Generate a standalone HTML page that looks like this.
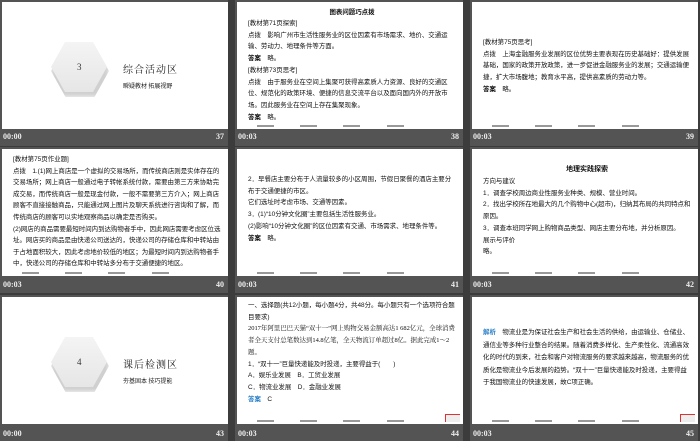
<!DOCTYPE html>
<html><head><meta charset="utf-8"><style>
*{margin:0;padding:0;box-sizing:border-box}
body{width:700px;height:438px;background:#3c3c3c;position:relative;overflow:hidden;font-family:"Liberation Sans","Noto Sans CJK SC",sans-serif}
.cell{position:absolute;width:228px;height:146px;background:#545454}
.s{position:absolute;left:2px;top:2px;width:226px;height:127px;background:#fff;overflow:hidden}
.t{position:absolute;top:132px;font:bold 8px "Liberation Serif",serif;color:#eee}
.tl{left:3px}.tr{right:4px}
.txt{position:absolute;left:11px;right:7px;font-size:6.45px;line-height:11.7px;color:#111;font-family:"Liberation Sans","Noto Sans CJK SC",sans-serif}
.foot{position:absolute;top:123px;height:2px;width:17px;background:#999}
b{font-weight:bold}
.hex{position:absolute;width:56px;height:50px;background:linear-gradient(#f4f4f4,#e6e6e6);clip-path:polygon(25% 0,75% 0,100% 50%,75% 100%,25% 100%,0 50%);}
.hexs{position:absolute;width:58px;height:52px;background:#d0d0d0;clip-path:polygon(25% 0,75% 0,100% 50%,75% 100%,25% 100%,0 50%);filter:blur(2px)}
.num{position:absolute;font:9px "Liberation Serif",serif;color:#333}
.ht{position:absolute;font:10px "Noto Serif CJK SC",serif;color:#222;letter-spacing:1px}
.hs{position:absolute;font:6px "Noto Sans CJK SC",sans-serif;color:#222}
</style></head><body>

<div class="cell" style="left:0;top:0">
 <div class="s">
  <div class="hexs" style="left:49px;top:43px"></div>
  <div class="hex" style="left:49px;top:40px"></div>
  <div class="num" style="left:75px;top:60px">3</div>
  <div class="ht" style="left:121px;top:59px">综合活动区</div>
  <div class="hs" style="left:121px;top:79px">瞬疑教材 拓展视野</div>
 </div>
 <div class="t tl">00:00</div><div class="t tr">37</div>
</div>

<div class="cell" style="left:235px;top:0">
 <div class="s">
  <div class="txt" style="top:5px;text-align:center;font-weight:bold">图表问题巧点拨</div>
  <div class="txt" style="top:16px">[教材第71页探索]<br>点拨　影响广州市生活性服务业的区位因素有市场需求、地价、交通运输、劳动力、地理条件等方面。<br><b>答案</b>　略。<br>[教材第73页思考]<br>点拨　由于服务业在空间上集聚可获得高素质人力资源、良好的交通区位、规范化的政策环境、便捷的信息交流平台以及面向国内外的开放市场。因此服务业在空间上存在集聚现象。<br><b>答案</b>　略。</div>
  <div class="foot" style="left:20px"></div><div class="foot" style="left:63px"></div><div class="foot" style="left:106px"></div><div class="foot" style="left:150px"></div>
 </div>
 <div class="t tl">00:03</div><div class="t tr">38</div>
</div>

<div class="cell" style="left:470px;top:0">
 <div class="s">
  <div class="txt" style="top:35px">[教材第75页思考]<br>点拨　上海金融服务业发展的区位优势主要表现在历史基础好：提供发展基础，国家的政策开放政策，进一步促进金融服务业的发展；交通运输便捷，扩大市场腹地；教育水平高，提供高素质的劳动力等。<br><b>答案</b>　略。</div>
  <div class="foot" style="left:20px"></div><div class="foot" style="left:63px"></div><div class="foot" style="left:106px"></div><div class="foot" style="left:150px"></div>
 </div>
 <div class="t tl">00:03</div><div class="t tr">39</div>
</div>

<div class="cell" style="left:0;top:147px">
 <div class="s">
  <div class="txt" style="top:5px;line-height:11.6px">[教材第75页作业题]<br>点拨　1.(1)网上商店是一个虚拟的交易场所，而传统商店则是实体存在的交易场所；网上商店一般通过电子转帐系统付款，需要由第三方来协助完成交易，而传统商店一般是现金付款，一般不需要第三方介入；网上商店顾客不直接接触商品，只能通过网上图片及聊天系统进行咨询和了解，而传统商店的顾客可以实地观察商品以确定是否购买。<br>(2)网店的商品需要最短时间内到达购物者手中，因此网店需要考虑区位选址。网店买的商品是由快递公司送达的，快递公司的存储仓库和中转站由于占地面积较大，因此考虑地价较低的地区；为最短时间内到达购物者手中，快递公司的存储仓库和中转站多分布于交通便捷的地区。</div>
  <div class="foot" style="left:20px"></div><div class="foot" style="left:63px"></div><div class="foot" style="left:106px"></div><div class="foot" style="left:150px"></div>
 </div>
 <div class="t tl" style="top:133px">00:03</div><div class="t tr" style="top:133px">40</div>
</div>

<div class="cell" style="left:235px;top:147px">
 <div class="s">
  <div class="txt" style="top:25px">2．早餐店主要分布于人流量较多的小区周围，节假日聚餐的酒店主要分布于交通便捷的市区。<br>它们选址时考虑市场、交通等因素。<br>3．(1)“10分钟文化圈”主要包括生活性服务业。<br>(2)影响“10分钟文化圈”的区位因素有交通、市场需求、地理条件等。<br><b>答案</b>　略。</div>
  <div class="foot" style="left:20px"></div><div class="foot" style="left:63px"></div><div class="foot" style="left:106px"></div><div class="foot" style="left:150px"></div>
 </div>
 <div class="t tl" style="top:133px">00:03</div><div class="t tr" style="top:133px">41</div>
</div>

<div class="cell" style="left:470px;top:147px">
 <div class="s">
  <div class="txt" style="top:15px;text-align:center;font-weight:bold;font-size:7px">地理实践探索</div>
  <div class="txt" style="top:27px">方向与建议<br>1．调查学校周边商业性服务业种类、规模、营业时间。<br>2．找出学校所在地最大的几个购物中心(超市)，归纳其布局的共同特点和原因。<br>3．调查本班同学网上购物商品类型、网店主要分布地，并分析原因。<br>展示与评价<br>略。</div>
  <div class="foot" style="left:20px"></div><div class="foot" style="left:63px"></div><div class="foot" style="left:106px"></div><div class="foot" style="left:150px"></div>
 </div>
 <div class="t tl" style="top:133px">00:03</div><div class="t tr" style="top:133px">42</div>
</div>

<div class="cell" style="left:0;top:295px">
 <div class="s">
  <div class="hexs" style="left:49px;top:43px"></div>
  <div class="hex" style="left:49px;top:40px"></div>
  <div class="num" style="left:75px;top:60px">4</div>
  <div class="ht" style="left:121px;top:59px">课后检测区</div>
  <div class="hs" style="left:121px;top:79px">夯基固本 技巧提能</div>
 </div>
 <div class="t tl" style="top:134px">00:00</div><div class="t tr" style="top:134px">43</div>
</div>

<div class="cell" style="left:235px;top:295px">
 <div class="s">
  <div class="txt" style="top:3px">一、选择题(共12小题，每小题4分，共48分。每小题只有一个选项符合题目要求)<br><span style="font-family:'Liberation Serif','Noto Serif CJK SC',serif">2017年阿里巴巴天猫“双十一”网上购物交易金额高达1 682亿元，全球消费者全天支付总笔数达到14.8亿笔，全天物流订单超过8亿。据此完成1～2题。</span><br>1．“双十一”巨量快递能及时投递，主要得益于(　　)<br>A．娱乐业发展　B．工贸业发展<br>C．物流业发展　D．金融业发展<br><b style="color:#2a7fc8">答案</b>　C</div>
  <div class="foot" style="left:20px"></div><div class="foot" style="left:63px"></div><div class="foot" style="left:106px"></div><div class="foot" style="left:150px"></div>
  <div style="position:absolute;left:208px;top:117px;width:15px;height:8px;background:#eee;border-top:1px solid #d33;border-left:1px solid #d33"></div>
 </div>
 <div class="t tl" style="top:134px">00:03</div><div class="t tr" style="top:134px">44</div>
</div>

<div class="cell" style="left:470px;top:295px">
 <div class="s">
  <div class="txt" style="top:30px;line-height:12.5px"><b style="color:#2a7fc8">解析</b>　物流业是为保证社会生产和社会生活的供给，由运输业、仓储业、通信业等多种行业整合的结果。随着消费多样化、生产柔性化、流通高效化的时代的到来，社会和客户对物流服务的要求越来越高，物流服务的优质化是物流业今后发展的趋势。“双十一”巨量快递能及时投递，主要得益于我国物流业的快速发展，故C项正确。</div>
  <div class="foot" style="left:20px"></div><div class="foot" style="left:63px"></div><div class="foot" style="left:106px"></div><div class="foot" style="left:150px"></div>
  <div style="position:absolute;left:208px;top:117px;width:15px;height:8px;background:#eee;border-top:1px solid #d33;border-left:1px solid #d33"></div>
 </div>
 <div class="t tl" style="top:134px">00:03</div><div class="t tr" style="top:134px">45</div>
</div>

</body></html>
